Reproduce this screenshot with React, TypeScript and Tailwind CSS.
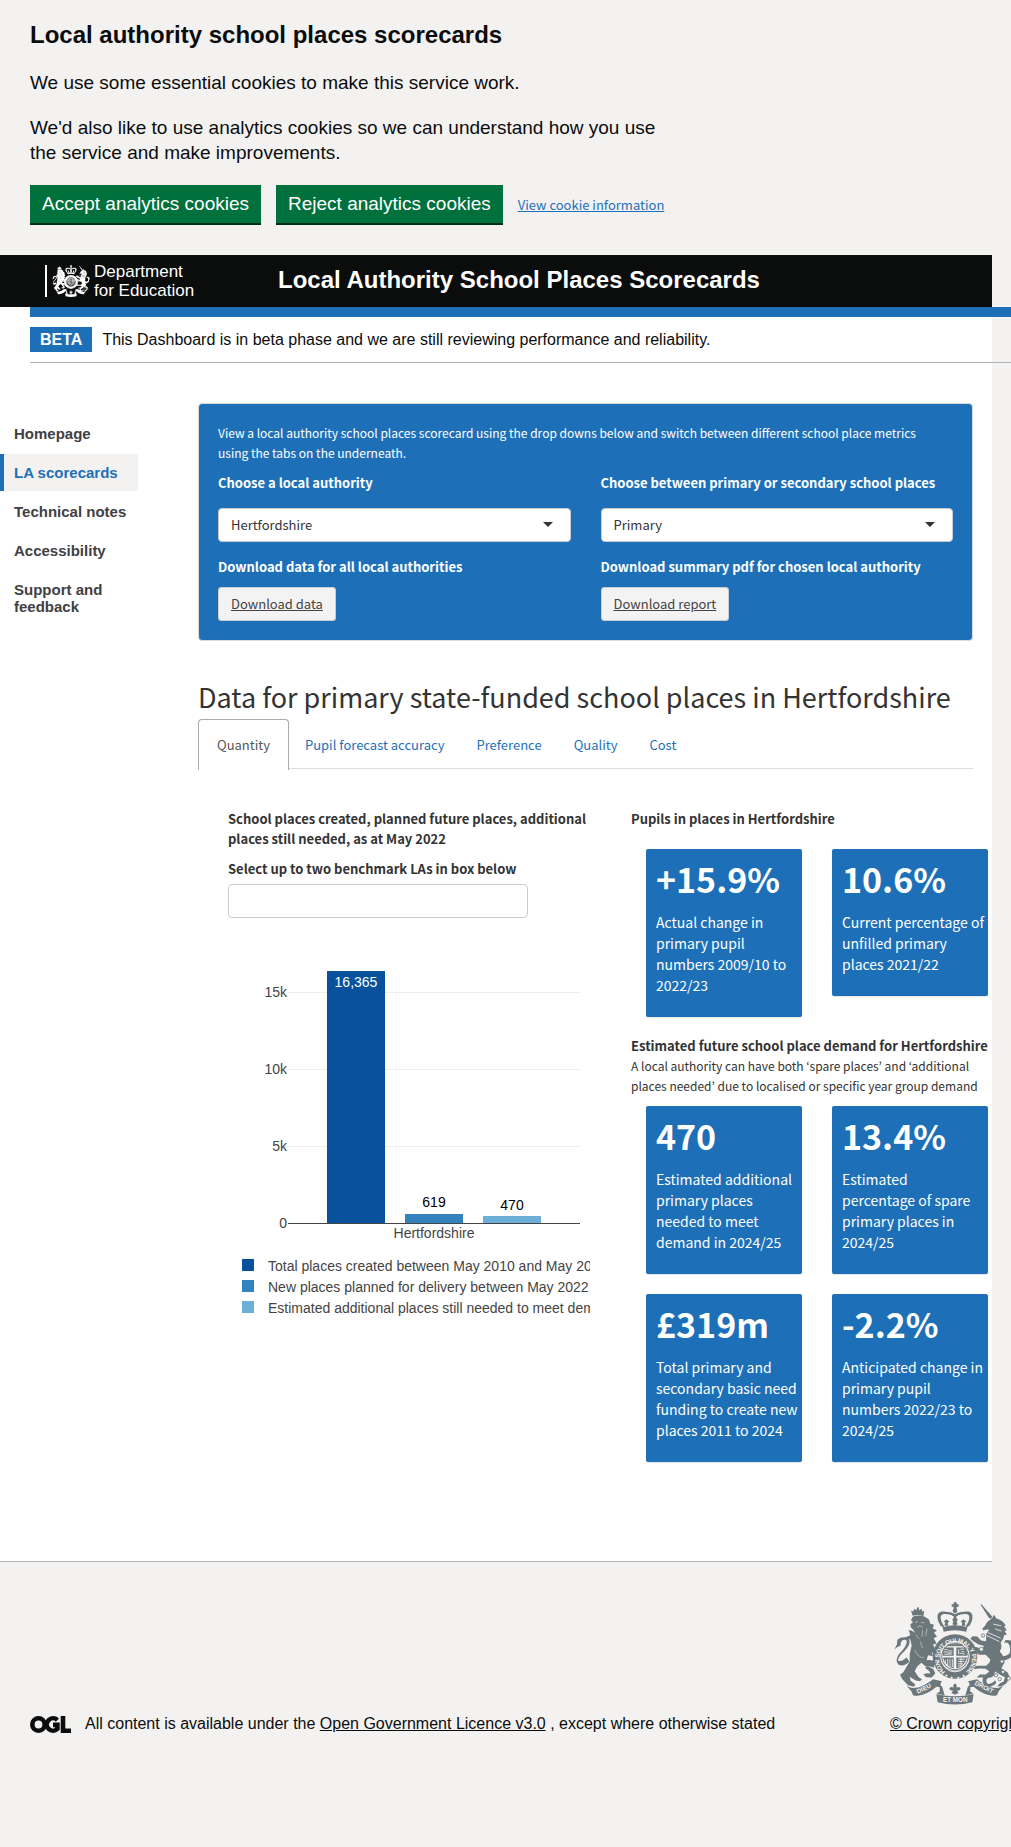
import React from 'react';

const sans = "font-['Liberation_Sans',Arial,sans-serif]";
const source = "font-['Noto_Sans_CJK_KR',sans-serif]";

function CoatOfArms({ className, ground, motto = true }: { className: string; ground: string; motto?: boolean }) {
  return (
    <svg viewBox="102 66 366 308" className={className} aria-hidden="true">
      <defs>
        <path id="garter-arc" d="M252 279A55 55 0 1 1 322 279" />
        <g id="ribbon-half">
          <path d="M139 316C158 332 190 320 219 297L246 303C240 309 240 316 246 322L229 320C206 340 178 351 159 345L154 333Z" fill="currentColor" />
        </g>
      </defs>

      {/* imperial crown */}
      <g fill="currentColor">
        <path d="M281 66h9v6h6v8h-6v7h-9v-7h-6v-8h6z" />
        <circle cx="285" cy="92" r="7" />
        <path d="M247 141C230 118 229 96 245 95C260 94 272 96 285 102C298 96 310 94 325 95C341 96 340 118 323 141L317 139C331 119 331 104 321 102C308 101 297 103 289 109V137H281V109C273 103 262 101 249 102C239 104 239 119 253 139Z" />
        <path d="M248 141Q285 130 322 141L319 155Q285 145 251 155Z" />
        <path d="M253 137l3-10-5-3 9-7 8 8-5 3 2 9zM277 133l3-10-4-5 9-6 9 6-4 5 3 10zM305 137l2-9-5-3 8-8 9 7-5 3 3 10z" />
      </g>
      <path d="M243 134C231 115 233 99 246 97Q265 96 282 105M327 134C339 115 337 99 324 97Q305 96 288 105" fill="none" stroke="currentColor" strokeWidth="6" strokeDasharray="1 6" strokeLinecap="round" />

      {/* lion */}
      <g fill="currentColor">
        <path d="M158 107L153 91l7 3 3-8 6 4 3-9h4l2 9 7-4 2 9 6-3-3 16Q174 101 158 107Z" />
        <path d="M158 110Q175 103 193 109L207 118L211 131L222 134L218 145L231 150L222 158L231 169L221 174L230 190L219 193L229 215L212 207L219 228L204 225L200 240Q218 238 231 246L231 254L222 251L222 263L208 258L196 258L184 248L171 260L164 273L176 291L186 297L180 303L167 301L149 290L152 302L166 313L162 320L144 315L127 297L120 284L130 276L149 244L149 222L155 196L151 178L134 173L151 165L146 150L154 151L165 158L159 148L153 143L151 132L159 126L153 120Z" />
        <path d="M193 195L207 199Q219 201 229 211L225 220L210 216L196 213Z" />
        <path d="M195 263L203 257L221 268L226 280L215 292L198 291L190 282L201 279L211 280L208 273Z" />
        <path d="M103 208L111 192L112 179L123 172L138 171Q152 175 148 191Q144 204 127 219Q112 233 115 241Q122 247 140 232L148 245Q130 262 115 253Q104 242 116 223Q137 202 140 188Q141 178 133 179Q121 181 122 196L111 201Z" />
      </g>
      <path d="M165 127l9-3M183 127l10 1M172 141q8-8 16 0M167 163l10 13M188 150l-2 20M201 145l-4 23M180 184l8 20M164 210q12 24 28 22" fill="none" stroke={ground} strokeWidth="2" className="opacity-70" />

      {/* unicorn */}
      <g fill="currentColor">
        <path d="M361 72L365 73L397 110L392 116L386 112Z" />
        <path d="M397 113L402 104L409 115Q428 119 437 136L432 139L441 150L434 152L440 164L432 165L430 175L422 188Q428 203 419 213L428 225L434 246L424 264L443 277L449 291L439 310L423 319L411 318L420 309L431 304L435 291L424 286L406 274L401 281L386 289L365 292L350 292L360 283L377 283L388 274L377 266L356 265L343 267L343 258L354 257L378 257L388 248L391 238L377 224L356 224L343 210L331 199L334 191L343 200L354 202L367 211L371 197L356 193L342 185L331 176L338 168L352 169L363 181L378 183L379 160L388 149L380 148L370 151L367 145L374 138L381 126Z" />
        <path d="M426 229Q455 226 450 204Q448 184 432 188L436 180Q459 177 464 193L467 205L458 205Q467 233 430 242Z" />
        <path d="M404 273Q404 291 391 292Q376 293 380 307Q383 315 397 308L406 300L409 309Q386 329 371 313Q360 292 381 281Z" />
      </g>
      <path d="M383 157l39 17M380 166l38 18M405 146l20 7M400 132l24 5" stroke={ground} strokeWidth="2.5" fill="none" />
      <g fill={ground} stroke="currentColor" strokeWidth="2.5">
        <circle cx="364" cy="207" r="6" /><circle cx="369" cy="166" r="5" /><circle cx="426" cy="244" r="5" /><circle cx="408" cy="285" r="5" /><circle cx="419" cy="297" r="5" /><circle cx="429" cy="275" r="5" /><circle cx="446" cy="295" r="5" />
      </g>

      {/* garter and shield */}
      <circle cx="285" cy="229" r="55" fill="none" stroke="currentColor" strokeWidth="24" />
      <ellipse cx="285" cy="229" rx="43" ry="46" fill="none" stroke={ground} strokeWidth="3" />
      <circle cx="285" cy="229" r="40" fill="none" stroke="currentColor" strokeWidth="3" />
      {motto && (
        <text fontSize="19" fontWeight="700" fill={ground} fontFamily="Liberation Sans" dy="6"><textPath href="#garter-arc">HONI SOIT QUI MAL Y PENSE</textPath></text>
      )}
      <g fill="currentColor">
        <path d="M252 202h29v25h-32q-1-14 3-25zM289 202h29q4 11 3 25h-32zM249 232h32v33q-27-8-32-33zM289 232h32q-5 25-32 33z" />
        <path d="M263 192h44v6h-44z" />
      </g>
      <g stroke={ground} strokeWidth="2.5" fill="none">
        <path d="M253 208h8l4 4h12M252 215h9l4 3h12M253 222h22M256 239v9l7 9M263 236v19M270 236v24M277 237v24" />
        <path d="M296 207v15M301 207h12M304 213l9 3M299 219l15 3M295 237h20M294 244h19M294 251h15M294 257h8M303 233v24" />
      </g>
      <g fill={ground}>
        <path d="M255 286l4-4 4 4-4 4zM271 293l4-4 4 4-4 4zM291 293l4-4 4 4-4 4zM307 287l4-4 4 4-4 4z" />
      </g>

      {/* ribbon and fleur-de-lis */}
      <use href="#ribbon-half" />
      <use href="#ribbon-half" transform="matrix(-1 0 0 1 570 0)" />
      <path d="M229 342Q285 354 341 342L337 366Q285 380 233 366ZM246 318L254 345L230 341L240 333Q238 326 240 318ZM324 318L316 345L340 341L330 333Q332 326 330 318Z" fill="currentColor" />
      <path d="M285 309q-8 7-4 14-9-6-13 2 2 9 11 5l-5 9q6 0 11 5 5-5 11-5l-5-9q9 4 11-5-4-8-13-2 4-7-4-14z" fill="currentColor" />
      {motto && (
        <g fill={ground} fontFamily="Liberation Sans" fontWeight="700" fontSize="19">
          <text transform="translate(174 341) rotate(-27)">DIEU</text>
          <text x="249" y="366">ET MON</text>
          <text transform="translate(343 313) rotate(27)">DROIT</text>
        </g>
      )}
    </svg>
  );
}

function OglLogo() {
  return (
    <svg viewBox="0 0 41 17" className="h-[17px] w-[41px] shrink-0" role="img" aria-label="Open Government Licence">
      <g fill="none" stroke="#0b0c0c" strokeWidth="4.6">
        <circle cx="8.5" cy="8.5" r="6.2" />
        <path d="M27.4 4.1A6.2 6.2 0 1 0 27.4 12.9V8.9H23" />
        <path d="M33 0V14.7H41" />
      </g>
    </svg>
  );
}

const navItems = ['Homepage', 'LA scorecards', 'Technical notes', 'Accessibility', 'Support and feedback'];
const tabs = ['Pupil forecast accuracy', 'Preference', 'Quality', 'Cost'];

function Dropdown({ id, label, value }: { id: string; label: string; value: string }) {
  return (
    <div>
      <label htmlFor={id} className="block font-bold">{label}</label>
      <div className="relative mt-[15px]">
        <select id={id} defaultValue={value} className="block h-[34px] w-full appearance-none rounded border border-[#ccc] bg-white px-3 text-[#333]">
          <option>{value}</option>
        </select>
        <svg viewBox="0 0 10 5" className="pointer-events-none absolute top-[14px] right-[18px] h-[5px] w-[10px]" aria-hidden="true">
          <path d="M0 0h10L5 5z" fill="#333" />
        </svg>
      </div>
    </div>
  );
}

function Download({ title, action }: { title: string; action: string }) {
  return (
    <div>
      <h3 className="font-bold">{title}</h3>
      <a href="#download" className="mt-[10px] inline-block rounded-[3px] border border-[#ccc] bg-[#f3f3f3] px-3 py-[6px] text-[#444] underline">{action}</a>
    </div>
  );
}

function Card({ value, text }: { value: string; text: string }) {
  return (
    <div className="rounded-[2px] bg-[#1d70b8] pt-[11px] pr-[3px] pb-[21px] pl-[10px] text-white shadow-[0_1px_1px_rgba(0,0,0,0.1)]">
      <p className="text-[34px] leading-[38px] font-bold whitespace-nowrap">{value}</p>
      <p className="mt-[14px] text-sm leading-[21px] whitespace-pre-line">{text}</p>
    </div>
  );
}

const legend = [
  ['#08519c', 'Total places created between May 2010 and May 2022'],
  ['#3182bd', 'New places planned for delivery between May 2022 and 2024'],
  ['#6baed6', 'Estimated additional places still needed to meet demand'],
];

function Chart() {
  return (
    <svg width="362" height="400" className="block overflow-hidden" fontFamily="Liberation Sans" fontSize="14" fill="#444" role="img" aria-label="School places in Hertfordshire">
      <path d="M59 74.5H352M59 151.5H352M59 228.5H352" stroke="#eee" />
      <g textAnchor="end">
        <text x="59" y="79">15k</text>
        <text x="59" y="156">10k</text>
        <text x="59" y="233">5k</text>
        <text x="59" y="310">0</text>
      </g>
      <rect x="99" y="53" width="58" height="252" fill="#08519c" />
      <rect x="177" y="296" width="58" height="9" fill="#3182bd" />
      <rect x="255" y="298" width="58" height="7" fill="#6baed6" />
      <path d="M60 305.5H352" stroke="#444" />
      <g textAnchor="middle">
        <text x="128" y="69" fill="#fff">16,365</text>
        <text x="206" y="289" fill="#000">619</text>
        <text x="284" y="292" fill="#000">470</text>
        <text x="206" y="320">Hertfordshire</text>
      </g>
      {legend.map(([color, label], i) => (
        <g key={color}>
          <rect x="14" y={341 + i * 21} width="12" height="12" fill={color} />
          <text x="40" y={353 + i * 21}>{label}</text>
        </g>
      ))}
    </svg>
  );
}

export default function App() {
  return (
    <div className={`min-h-screen overflow-x-hidden bg-[#f3f2f1] text-[#0b0c0c] ${sans}`}>
      <section className="px-[30px] pt-5 pb-[30px]" aria-label="Cookies">
        <h2 className="text-2xl leading-[30px] font-bold">Local authority school places scorecards</h2>
        <div className="mt-5 max-w-[640px] space-y-5 text-[19px] leading-[25px]">
          <p>We use some essential cookies to make this service work.</p>
          <p>We'd also like to use analytics cookies so we can understand how you use the service and make improvements.</p>
        </div>
        <div className="mt-5 flex items-center gap-[15px]">
          <button className="mb-[2px] h-[38px] bg-[#00703c] px-3 text-[19px] leading-[38px] text-white shadow-[0_2px_0_#002d18]">Accept analytics cookies</button>
          <button className="mb-[2px] h-[38px] bg-[#00703c] px-3 text-[19px] leading-[38px] text-white shadow-[0_2px_0_#002d18]">Reject analytics cookies</button>
          <a href="#cookies" className={`text-[13px] leading-5 text-[#1d70b8] underline ${source}`}>View cookie information</a>
        </div>
      </section>

      <div className="mr-[19px] bg-white">
        <header className="flex h-[52px] items-center bg-[#0b0c0c] text-white">
          <div className="ml-[45px] flex h-8 w-[233px] items-center border-l-2 border-white pl-[5px]">
            <CoatOfArms className="h-8 w-[38px]" ground="#0b0c0c" motto={false} />
            <p className="ml-[4px] text-[17px] leading-[19px]">Department<br />for Education</p>
          </div>
          <h1 className="pb-[2px] text-2xl font-bold">Local Authority School Places Scorecards</h1>
        </header>
        <div className="-mr-[19px] ml-[30px] border-t-[10px] border-b border-t-[#1d70b8] border-b-[#b1b4b6] py-[10px]">
          <p className="flex items-center text-base leading-[25px]">
            <strong className="mr-[10px] bg-[#1d70b8] px-[10px] text-white">BETA</strong>
            This Dashboard is in beta phase and we are still reviewing performance and reliability.
          </p>
        </div>

        <div className="flex pb-[99px]">
          <nav className="w-[198px] shrink-0 pt-[52px]">
            <ul className="w-[138px] space-y-[2px] text-[15px] leading-[17px] font-bold">
              {navItems.map((item) => (
                <li key={item}>
                  <a href="#nav" className={item === 'LA scorecards' ? 'block border-l-4 border-[#1d70b8] bg-[#f3f2f1] py-[10px] pl-[10px] text-[#1d70b8]' : 'block py-[10px] pl-[14px] text-[#414042]'}>{item}</a>
                </li>
              ))}
            </ul>
          </nav>

          <main className={`mr-[19px] min-w-0 flex-1 pt-10 text-[13px] leading-5 text-[#333] ${source}`}>
            <section className="rounded border border-[#dcdcdc] bg-[#1d70b8] p-[19px] text-white">
              <p className="text-xs leading-5">View a local authority school places scorecard using the drop downs below and switch between different school place metrics<br />using the tabs on the underneath.</p>
              <div className="mt-[10px] grid grid-cols-2 gap-x-[30px] gap-y-[15px]">
                <Dropdown id="la" label="Choose a local authority" value="Hertfordshire" />
                <Dropdown id="phase" label="Choose between primary or secondary school places" value="Primary" />
                <Download title="Download data for all local authorities" action="Download data" />
                <Download title="Download summary pdf for chosen local authority" action="Download report" />
              </div>
            </section>

            <h2 className="mt-[39px] text-[27px] leading-[34px] whitespace-nowrap">Data for primary state-funded school places in Hertfordshire</h2>
            <div role="tablist" className="mt-[5px] flex h-[50px] border-b border-[#ddd]">
              <button role="tab" aria-selected="true" className="h-[51px] rounded-t border border-b-0 border-[#aaa] bg-white px-[18px] text-[#555]">Quantity</button>
              {tabs.map((t) => (
                <button key={t} role="tab" aria-selected="false" className="px-4 pt-[2px] text-[#1d70b8]">{t}</button>
              ))}
            </div>

            <div className="-mr-[30px] ml-[30px] grid grid-cols-2 gap-x-[31px] pt-10">
              <div>
                <h3 className="font-bold">School places created, planned future places, additional places still needed, as at May 2022</h3>
                <label htmlFor="benchmark" className="mt-[10px] block font-bold">Select up to two benchmark LAs in box below</label>
                <input id="benchmark" type="text" className="mt-[5px] block h-[34px] w-[300px] rounded border border-[#ccc] bg-white px-3" />
                <Chart />
              </div>
              <div>
                <h3 className="font-bold">Pupils in places in Hertfordshire</h3>
                <div className="mt-5 grid grid-cols-2 items-start gap-[30px] px-[15px]">
                  <Card value="+15.9%" text="Actual change in primary pupil numbers 2009/10 to 2022/23" />
                  <Card value="10.6%" text="Current percentage of unfilled primary places 2021/22" />
                </div>
                <h3 className="mt-[19px] font-bold">Estimated future school place demand for Hertfordshire</h3>
                <p className="text-xs leading-5 whitespace-nowrap">A local authority can have both ‘spare places’ and ‘additional<br />places needed’ due to localised or specific year group demand</p>
                <div className="mt-[10px] grid grid-cols-2 items-start gap-x-[30px] gap-y-5 px-[15px]">
                  <Card value="470" text="Estimated additional primary places needed to meet demand in 2024/25" />
                  <Card value="13.4%" text={'Estimated\npercentage of spare primary places in 2024/25'} />
                  <Card value="£319m" text="Total primary and secondary basic need funding to create new places 2011 to 2024" />
                  <Card value="-2.2%" text="Anticipated change in primary pupil numbers 2022/23 to 2024/25" />
                </div>
              </div>
            </div>
          </main>
        </div>
      </div>

      <footer className="mr-[19px] border-t border-[#b1b4b6] pt-10 text-base leading-6">
        <div className="-mr-[100px] flex items-end justify-between pl-[30px]">
          <div className="flex items-center gap-[14px]">
            <OglLogo />
            <p className="whitespace-nowrap">All content is available under the <a href="#ogl" className="underline">Open Government Licence v3.0</a> , except where otherwise stated</p>
          </div>
          <a href="#copyright" className="mr-[69px] w-[133px] whitespace-nowrap underline">
            <CoatOfArms className="mb-[7px] ml-1 h-[103px] w-[122px] text-[#6c777b]" ground="#f3f2f1" />
            © Crown copyright
          </a>
        </div>
      </footer>
    </div>
  );
}
